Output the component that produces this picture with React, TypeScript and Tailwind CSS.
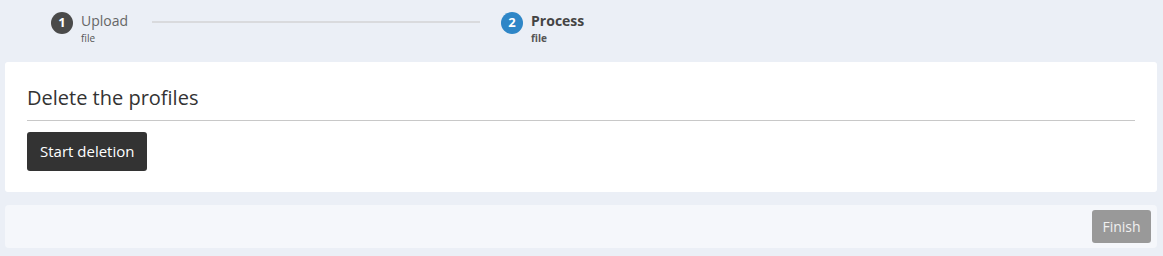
export default function App() {
  const steps = [
    { num: 1, title: "Upload", sub: "file", active: false },
    { num: 2, title: "Process", sub: "file", active: true },
  ];

  return (
    <div className="w-[1163px] h-[256px] bg-[#ebeff6] pl-[5px] pr-[6px] font-['Open_Sans',sans-serif] text-[#333]">
      {/* stepper */}
      <div className="flex items-start h-[62px] pt-[12px] pl-[46px]">
        <Step {...steps[0]} />
        <div className="w-[328px] h-[2px] bg-[#d9dadd] mt-[9px] ml-[24px] mr-[21px]" />
        <Step {...steps[1]} />
      </div>

      {/* card */}
      <div className="bg-white rounded-[3px] px-[22px] pt-[22px] pb-[21px]">
        <h3 className="text-[20px] leading-[28px] font-normal text-[#333] pb-[8px] border-b border-[#c8c8c8]">
          Delete the profiles
        </h3>
        <button className="mt-[11px] h-[39px] px-[13px] bg-[#333] text-white text-[15px] rounded-[3px]">
          Start deletion
        </button>
      </div>

      {/* footer */}
      <div className="mt-[13px] h-[43px] bg-[#f5f7fb] rounded-[4px] flex justify-end items-start pt-[5px] pr-[6px]">
        <button className="h-[33px] w-[59px] bg-[#999] text-[#f0f0f0] text-[14px] rounded-[3px]">
          Finish
        </button>
      </div>
    </div>
  );
}

type StepProps = {
  num: number;
  title: string;
  sub: string;
  active: boolean;
};

function Step({ num, title, sub, active }: StepProps) {
  return (
    <div className="flex items-start">
      <div
        className={`w-[22px] h-[22px] rounded-full flex items-center justify-center text-white text-[13px] font-bold ${
          active ? "bg-[#2e86c7]" : "bg-[#4a4a4a]"
        }`}
      >
        {num}
      </div>
      <div className="ml-[8px] flex flex-col -mt-[1px]">
        <span
          className={`text-[14px] leading-[20px] ${
            active ? "font-bold text-[#444]" : "text-[#666]"
          }`}
        >
          {title}
        </span>
        <span
          className={`text-[10px] leading-[13px] mt-[1px] ${
            active ? "font-bold text-[#555]" : "text-[#555]"
          }`}
        >
          {sub}
        </span>
      </div>
    </div>
  );
}
